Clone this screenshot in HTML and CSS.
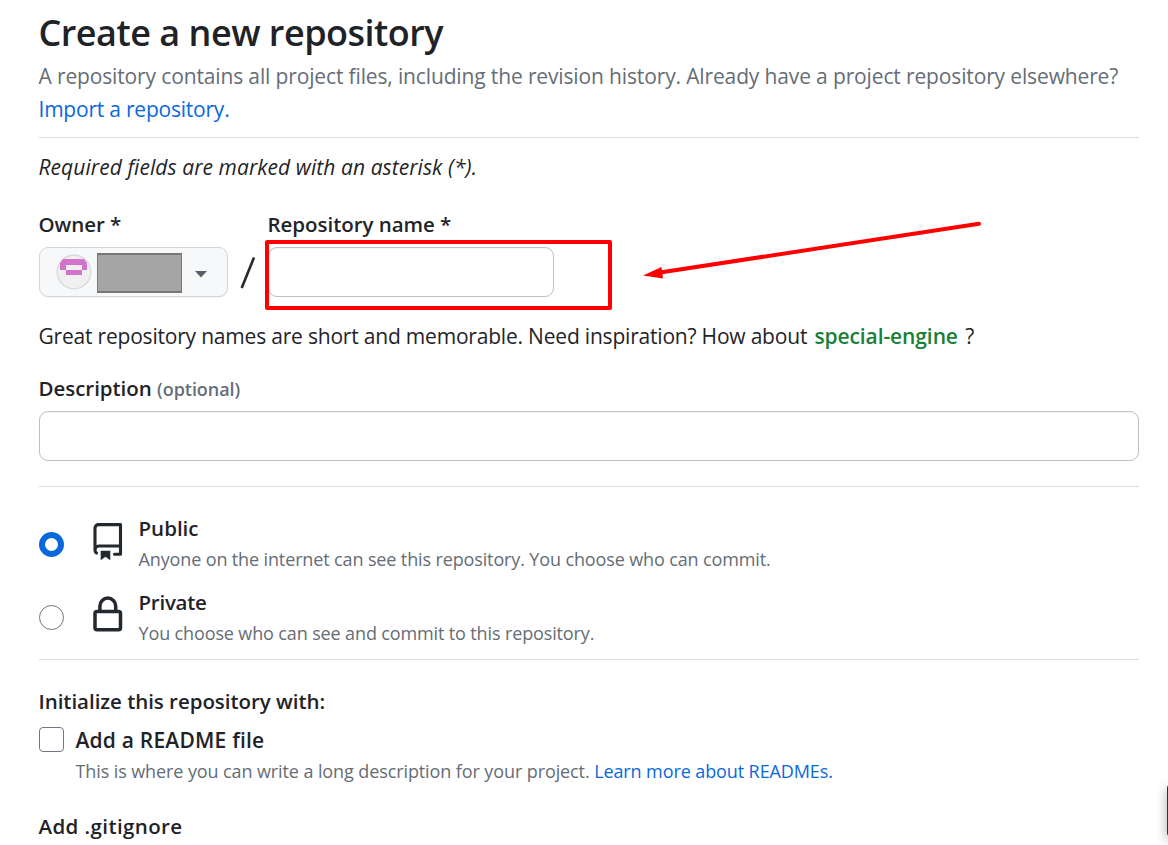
FILE: index.html
```html
<!DOCTYPE html>
<html lang="en">
<head>
<meta charset="utf-8">
<title>Create a new repository</title>
<link rel="stylesheet" href="styles.css">
</head>
<body>
<main class="page">
  <header class="intro">
    <h1 class="title">Create a new repository</h1>
    <p class="lead">A repository contains all project files, including the revision history. Already have a project repository elsewhere?<br><a class="link import">Import a repository.</a></p>
  </header>
  <p class="required">Required fields are marked with an asterisk (*).</p>
  <div class="name-row">
    <div class="field owner">
      <span class="label">Owner *</span>
      <button class="owner-button" type="button">
        <svg class="avatar" width="36" height="36" viewBox="0 0 36 36">
          <circle cx="18" cy="18" r="16.8" fill="#f0f0f0" stroke="#d5d7da" stroke-width="1.2"/>
          <path fill="#d473cb" d="M7 5h21l3 4v7h-5v5H10v-5H4V9zM10 11v5h16v-5z" fill-rule="evenodd"/>
        </svg>
        <span class="owner-name"></span>
        <svg class="caret" width="12" height="7" viewBox="0 0 12 7"><path fill="#57606a" d="M0 0h12L6 6.5z"/></svg>
      </button>
    </div>
    <svg class="slash" width="16" height="34" viewBox="0 0 16 34"><path d="M1.700 32 14 1.500" stroke="#24292f" stroke-width="2.600"/></svg>
    <div class="field repo">
      <span class="label">Repository name *</span>
      <div class="input repo-input"></div>
      <div class="highlight"></div>
    </div>
  </div>
  <p class="hint">Great repository names are short and memorable. Need inspiration? How about <strong class="suggestion">special-engine</strong> ?</p>
  <div class="label description-label">Description <span class="optional">(optional)</span></div>
  <div class="input"></div>
  <section class="visibility">
    <div class="choice">
      <span class="radio checked"></span>
      <svg class="icon" width="38" height="38" viewBox="0 0 38 38" fill="none" stroke="#24292f" stroke-width="3.100" stroke-linecap="round" stroke-linejoin="round"><path d="M25.500 31.200h6V1.600H9.500a3.500 3.500 0 0 0-3.500 3.500v22.300a3.800 3.800 0 0 0 1.500 2.700M6 27a4 4 0 0 1 4-4h21.500"/><path d="M11.700 27.800h9.600v9.500l-4.800-3.500-4.800 3.500z" fill="#24292f" stroke="none"/></svg>
      <div class="choice-text"><b class="choice-title">Public</b><span class="note">Anyone on the internet can see this repository. You choose who can commit.</span></div>
    </div>
    <div class="choice">
      <span class="radio second"></span>
      <svg class="icon lock" width="38" height="38" viewBox="0 0 38 38" fill="none" stroke="#24292f" stroke-width="3.500"><rect x="6" y="15.500" width="25.500" height="18.300" rx="2"/><path d="M10.900 15.500V10a7.900 7.900 0 0 1 15.800 0v5.500"/></svg>
      <div class="choice-text"><b class="choice-title tight">Private</b><span class="note">You choose who can see and commit to this repository.</span></div>
    </div>
  </section>
  <section class="initialize">
    <div class="label">Initialize this repository with:</div>
    <div class="readme">
      <span class="checkbox"></span>
      <div class="choice-text"><b class="choice-title readme-title">Add a README file</b><span class="note readme-note">This is where you can write a long description for your project. <a class="link">Learn more about READMEs.</a></span></div>
    </div>
    <div class="label wide">Add .gitignore</div>
  </section>
  <svg class="arrow" width="342" height="64" viewBox="640 218 342 64"><path d="M979 223.800 660 272.500" stroke="#f00" stroke-width="4" stroke-linecap="round"/><path d="M643 275.500 661.500 267 663 278.500z" fill="#f00"/></svg>
  <div class="edge-tab"></div>
</main>
</body>
</html>
```
FILE: styles.css
```css
* { box-sizing: border-box; }
body { margin: 0; background: #fff; overflow: hidden; }
.page {
  position: relative;
  width: 1168px;
  height: 845px;
  padding: 8px 29px 0 38.5px;
  overflow: hidden;
  color: #1f2328;
  font: 21px/33px "Open Sans", "Noto Sans", sans-serif;
  white-space: nowrap;
}
h1, p { margin: 0; }
.intro { height: 130px; border-bottom: 1px solid #d8dee4; }
.title { height: 52px; font-size: 36px; line-height: 50px; font-weight: 550; letter-spacing: -.5px; }
.lead { color: #656d76; letter-spacing: -.14px; }
.import { letter-spacing: -.22px; }
.link { color: #0969da; }
.required { margin-top: 13px; font-style: italic; letter-spacing: .07px; }
.name-row { display: flex; height: 88px; margin-top: 25px; }
.field { position: relative; }
.label { display: block; height: 38px; font-weight: 550; font-size: 20.5px; line-height: 31px; letter-spacing: -.04px; }
.owner { width: 189px; }
.owner-button {
  display: flex;
  align-items: center;
  width: 189px;
  height: 50px;
  padding: 0 0 0 16px;
  border: 1px solid #d3d7dc;
  border-radius: 9px;
  background: #f6f8fa;
  box-shadow: 0 1px 1px rgba(31, 35, 40, .05);
}
.owner-name {
  width: 85px;
  height: 40px;
  margin: 2px 13px 0 5px;
  border: solid #777;
  border-width: 2px 1px;
  background: #a5a5a5;
}
.caret { margin-top: 4px; }
.slash { margin: 47px 12px 0; }
.repo { width: 286px; }
.input {
  height: 50px;
  border: 1px solid #bdc1c9;
  border-radius: 9px;
  box-shadow: inset 0 1px 1px rgba(208, 215, 222, .25);
}
.highlight {
  position: absolute;
  left: -3px;
  top: 31px;
  width: 347px;
  height: 70px;
  border: 4px solid #f00;
  border-radius: 2px;
}
.hint { margin-top: 23px; letter-spacing: -.2px; }
.suggestion { margin: 0 2px; color: #1a7f37; font-weight: 600; letter-spacing: -.1px; }
.description-label { margin-top: 20px; }
.optional { color: #656d76; font-size: 18px; }
.visibility {
  height: 174px;
  margin-top: 25px;
  padding-top: 26px;
  border-top: 1px solid #d8dee4;
  border-bottom: 1px solid #d8dee4;
}
.choice { display: flex; height: 74px; }
.radio {
  width: 25px;
  height: 25px;
  margin-top: 19px;
  border: 1px solid #6e7781;
  border-radius: 50%;
}
.checked { border: 6px solid #0969da; }
.second { margin-top: 18px; }
.icon { margin: 10px 12px 0 25px; }
.lock { margin-top: 9px; }
.choice-text { display: flex; flex-direction: column; align-items: flex-start; }
.choice-title { height: 30px; font-size: 20.5px; line-height: 31px; font-weight: 550; }
.tight { letter-spacing: -.25px; }
.wide { letter-spacing: .4px; }
.readme-title { font-size: 21px; line-height: 33px; letter-spacing: .2px; }
.note { color: #656d76; font-size: 18px; letter-spacing: -.13px; }
.initialize { padding-top: 26px; }
.readme { display: flex; height: 87px; }
.readme-note { line-height: 35px; letter-spacing: -.1px; }
.checkbox {
  width: 25px;
  height: 25px;
  margin: 3px 12px 0 0;
  border: 1px solid #6e7781;
  border-radius: 4px;
}
.arrow { position: absolute; left: 640px; top: 218px; }
.edge-tab {
  position: absolute;
  left: 1167px;
  top: 785px;
  width: 8px;
  height: 51px;
  border-radius: 3px 0 0 3px;
  background: #333;
  box-shadow: 0 4px 12px rgba(0, 0, 0, .35);
}
```
